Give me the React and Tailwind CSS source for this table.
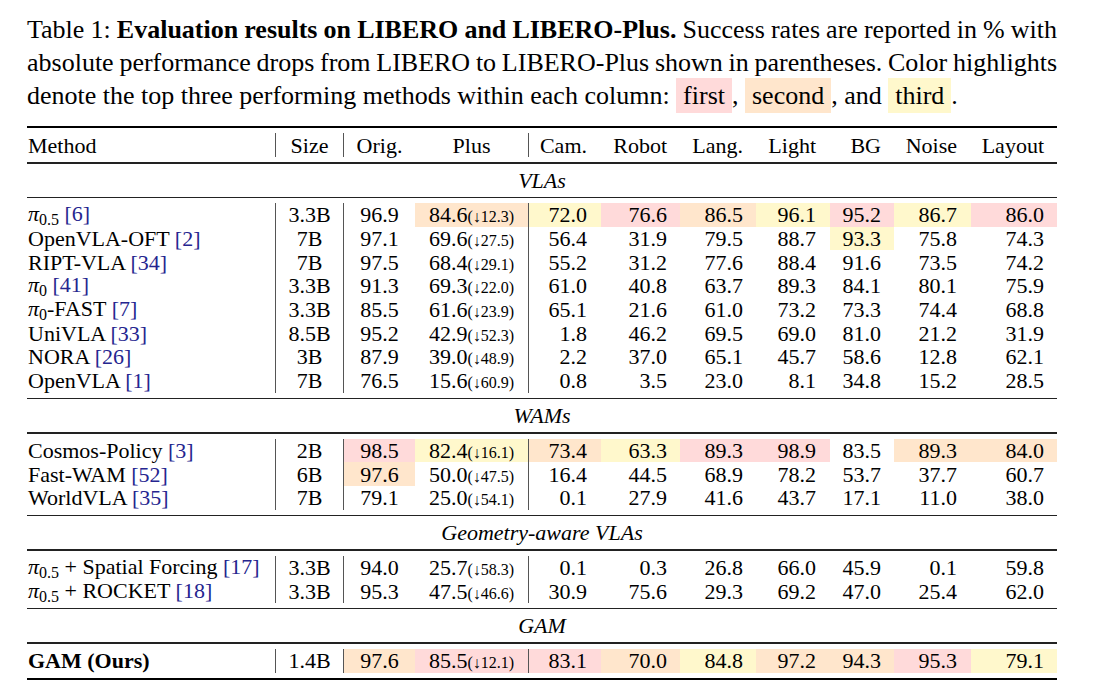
const HL = { 1: 'bg-[#ffdada]', 2: 'bg-[#ffe6cc]', 3: 'bg-[#fff8cc]' };

const Pi = ({ s }) => (
  <span>
    <i>π</i>
    <span className="text-[16px] align-[-4px]">{s}</span>
  </span>
);

const Cite = ({ n }) => <span className="text-[#25258f]">[{n}]</span>;

const blocks = [
  {
    label: 'VLAs',
    rows: [
      { m: <><Pi s="0.5" /> <Cite n="6" /></>, size: '3.3B', orig: '96.9', plus: '84.6', drop: '12.3', v: ['72.0', '76.6', '86.5', '96.1', '95.2', '86.7', '86.0'], hl: { plus: 2, cam: 3, robot: 1, lang: 2, light: 3, bg: 1, noise: 3, layout: 1 } },
      { m: <>OpenVLA-OFT <Cite n="2" /></>, size: '7B', orig: '97.1', plus: '69.6', drop: '27.5', v: ['56.4', '31.9', '79.5', '88.7', '93.3', '75.8', '74.3'], hl: { bg: 3 } },
      { m: <>RIPT-VLA <Cite n="34" /></>, size: '7B', orig: '97.5', plus: '68.4', drop: '29.1', v: ['55.2', '31.2', '77.6', '88.4', '91.6', '73.5', '74.2'], hl: {} },
      { m: <><Pi s="0" /> <Cite n="41" /></>, size: '3.3B', orig: '91.3', plus: '69.3', drop: '22.0', v: ['61.0', '40.8', '63.7', '89.3', '84.1', '80.1', '75.9'], hl: {} },
      { m: <><Pi s="0" />-FAST <Cite n="7" /></>, size: '3.3B', orig: '85.5', plus: '61.6', drop: '23.9', v: ['65.1', '21.6', '61.0', '73.2', '73.3', '74.4', '68.8'], hl: {} },
      { m: <>UniVLA <Cite n="33" /></>, size: '8.5B', orig: '95.2', plus: '42.9', drop: '52.3', v: ['1.8', '46.2', '69.5', '69.0', '81.0', '21.2', '31.9'], hl: {} },
      { m: <>NORA <Cite n="26" /></>, size: '3B', orig: '87.9', plus: '39.0', drop: '48.9', v: ['2.2', '37.0', '65.1', '45.7', '58.6', '12.8', '62.1'], hl: {} },
      { m: <>OpenVLA <Cite n="1" /></>, size: '7B', orig: '76.5', plus: '15.6', drop: '60.9', v: ['0.8', '3.5', '23.0', '8.1', '34.8', '15.2', '28.5'], hl: {} },
    ],
  },
  {
    label: 'WAMs',
    rows: [
      { m: <>Cosmos-Policy <Cite n="3" /></>, size: '2B', orig: '98.5', plus: '82.4', drop: '16.1', v: ['73.4', '63.3', '89.3', '98.9', '83.5', '89.3', '84.0'], hl: { orig: 1, plus: 3, cam: 2, robot: 3, lang: 1, light: 1, noise: 2, layout: 2 } },
      { m: <>Fast-WAM <Cite n="52" /></>, size: '6B', orig: '97.6', plus: '50.0', drop: '47.5', v: ['16.4', '44.5', '68.9', '78.2', '53.7', '37.7', '60.7'], hl: { orig: 2 } },
      { m: <>WorldVLA <Cite n="35" /></>, size: '7B', orig: '79.1', plus: '25.0', drop: '54.1', v: ['0.1', '27.9', '41.6', '43.7', '17.1', '11.0', '38.0'], hl: {} },
    ],
  },
  {
    label: 'Geometry-aware VLAs',
    rows: [
      { m: <><Pi s="0.5" /> + Spatial Forcing <Cite n="17" /></>, size: '3.3B', orig: '94.0', plus: '25.7', drop: '58.3', v: ['0.1', '0.3', '26.8', '66.0', '45.9', '0.1', '59.8'], hl: {} },
      { m: <><Pi s="0.5" /> + ROCKET <Cite n="18" /></>, size: '3.3B', orig: '95.3', plus: '47.5', drop: '46.6', v: ['30.9', '75.6', '29.3', '69.2', '47.0', '25.4', '62.0'], hl: {} },
    ],
  },
  {
    label: 'GAM',
    rows: [
      { m: <b>GAM (Ours)</b>, size: '1.4B', orig: '97.6', plus: '85.5', drop: '12.1', v: ['83.1', '70.0', '84.8', '97.2', '94.3', '95.3', '79.1'], hl: { orig: 2, plus: 1, cam: 1, robot: 2, lang: 3, light: 2, bg: 2, noise: 1, layout: 3 } },
    ],
  },
];

const valueCols = [
  { key: 'cam', head: 'Cam.', cls: 'w-[73px] pr-[14px] border-l border-[#555]' },
  { key: 'robot', head: 'Robot', cls: 'w-[79px] pr-[13px]' },
  { key: 'lang', head: 'Lang.', cls: 'w-[76px] pr-[13px]' },
  { key: 'light', head: 'Light', cls: 'w-[74px] pr-[14px]' },
  { key: 'bg', head: 'BG', cls: 'w-[64px] pr-[13px]' },
  { key: 'noise', head: 'Noise', cls: 'w-[77px] pr-[14px]' },
  { key: 'layout', head: 'Layout', cls: 'w-[86px] pr-[13px]' },
];

const cell = 'shrink-0 flex items-center whitespace-nowrap';

function Row({ r }) {
  return (
    <div className="flex h-[23.7px]">
      <div className={`${cell} w-[248px] pl-px`}>
        <span>{r.m}</span>
      </div>
      <div className={`${cell} w-[68px] justify-center border-l border-[#555]`}>{r.size}</div>
      <div className={`${cell} w-[72px] justify-center border-l border-[#555] ${HL[r.hl.orig] || ''}`}>{r.orig}</div>
      <div className={`${cell} w-[113px] justify-center ${HL[r.hl.plus] || ''}`}>
        <span>
          {r.plus}
          <span className="text-[16px]">(↓{r.drop})</span>
        </span>
      </div>
      {valueCols.map((c, i) => (
        <div key={c.key} className={`${cell} justify-end ${c.cls} ${HL[r.hl[c.key]] || ''}`}>
          {r.v[i]}
        </div>
      ))}
    </div>
  );
}

const MidRule = () => <div className="h-[1.5px] bg-[#222]" />;

// full lines are justified like TeX, with spaces allowed to shrink a little
const fullLine = 'block whitespace-nowrap text-justify [text-align-last:justify] [word-spacing:-1.5px]';

export default function App() {
  return (
    <div className="w-[1109px] h-[695px] bg-white text-black font-['Liberation_Serif',serif] pl-[27px] pt-[13px] overflow-hidden">
      <p className="w-[1030px] text-[26px] leading-[33px]">
        <span className={fullLine}>
          Table 1: <b>Evaluation results on LIBERO and LIBERO-Plus.</b> Success rates are reported in % with
        </span>
        <span className={fullLine}>
          absolute performance drops from LIBERO to LIBERO-Plus shown in parentheses. Color highlights
        </span>
        <span className="block whitespace-nowrap">
          denote the top three performing methods within each column:{' '}
          <span className="bg-[#ffdada] px-[7px] py-[3px]">first</span>,{' '}
          <span className="bg-[#ffe6cc] px-[7px] py-[3px]">second</span>, and{' '}
          <span className="bg-[#fff8cc] px-[7px] py-[3px]">third</span>.
        </span>
      </p>

      <div className="w-[1030px] mt-[14px] text-[22px]">
        <div className="h-[2px] bg-black" />
        <div className="pt-[5px] pb-[5px]">
          <div className="flex h-[24px]">
            <div className={`${cell} w-[248px] pl-px`}>Method</div>
            <div className={`${cell} w-[68px] justify-center border-l border-[#555]`}>Size</div>
            <div className={`${cell} w-[72px] justify-center border-l border-[#555]`}>Orig.</div>
            <div className={`${cell} w-[113px] justify-center`}>Plus</div>
            {valueCols.map((c) => (
              <div key={c.key} className={`${cell} justify-end ${c.cls}`}>{c.head}</div>
            ))}
          </div>
        </div>
        {blocks.map((b) => (
          <div key={b.label}>
            <MidRule />
            <div className="h-[33px] flex items-center justify-center italic">{b.label}</div>
            <MidRule />
            <div className="pt-[5px] pb-[5px]">
              {b.rows.map((r, i) => (
                <Row key={i} r={r} />
              ))}
            </div>
          </div>
        ))}
        <div className="h-[2px] bg-black" />
      </div>
    </div>
  );
}
